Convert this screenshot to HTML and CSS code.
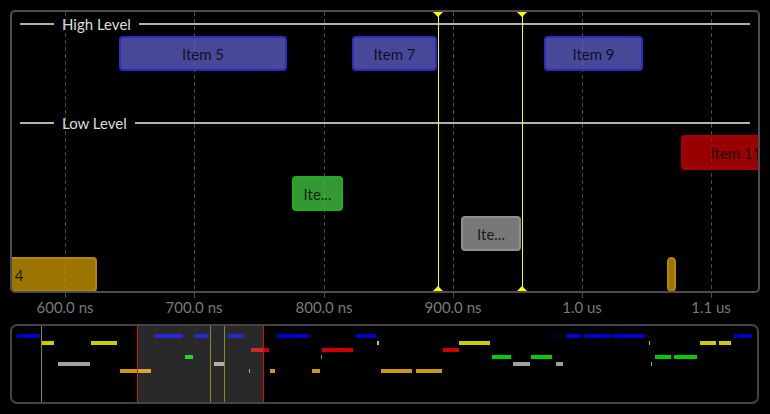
FILE: index.html
```html
<!DOCTYPE html>
<html>
<head>
<meta charset="utf-8">
<link rel="stylesheet" href="styles.css">
</head>
<body>
<div class="view">
  <div class="chart">
    <div class="inner">
      <div class="grid" style="left:53px"></div>
      <div class="grid" style="left:182px"></div>
      <div class="grid" style="left:312px"></div>
      <div class="grid" style="left:441px"></div>
      <div class="grid" style="left:570px"></div>
      <div class="grid" style="left:699px"></div>

      <div class="level">
        <span class="seg"></span><span class="lvl-label">High Level</span><span class="rule"></span>
      </div>
      <div class="track track-high">
        <div class="item blue" style="left:107px;width:168px;top:0">Item 5</div>
        <div class="item blue" style="left:340px;width:85px;top:0">Item 7</div>
        <div class="item blue" style="left:532px;width:99px;top:0">Item 9</div>
      </div>
      <div class="level">
        <span class="seg"></span><span class="lvl-label">Low Level</span><span class="rule"></span>
      </div>
      <div class="track track-low">
        <div class="item red" style="left:669px;width:110px;top:0">Item 11</div>
        <div class="item green" style="left:280px;width:51px;top:41px">Ite...</div>
        <div class="item gray" style="left:449px;width:60px;top:81px">Ite...</div>
        <div class="item yellow" style="left:-104px;width:189px;top:122px">Item 4</div>
        <div class="item yellow pill" style="left:655px;width:9px;top:122px"></div>
      </div>

      <div class="cursor" style="left:426px"><span class="tri tri-top"></span><span class="tri tri-bot"></span></div>
      <div class="cursor" style="left:510px"><span class="tri tri-top"></span><span class="tri tri-bot"></span></div>
    </div>
  </div>

  <div class="axis">
    <div class="tick" style="left:55px"><span>600.0 ns</span></div>
    <div class="tick" style="left:184px"><span>700.0 ns</span></div>
    <div class="tick" style="left:314px"><span>800.0 ns</span></div>
    <div class="tick" style="left:443px"><span>900.0 ns</span></div>
    <div class="tick" style="left:572px"><span>1.0 us</span></div>
    <div class="tick" style="left:701px"><span>1.1 us</span></div>
  </div>

  <div class="overview">
    <div class="ov-inner">
      <div class="ov-row">
        <i class="b c-blue" style="left:5px;width:23px"></i>
        <i class="b c-blue" style="left:143px;width:28px"></i>
        <i class="b c-blue" style="left:183px;width:14px"></i>
        <i class="b c-blue" style="left:216px;width:16px"></i>
        <i class="b c-blue" style="left:265px;width:32px"></i>
        <i class="b c-blue" style="left:344px;width:20px"></i>
        <i class="b c-blue" style="left:542px;width:1px"></i>
        <i class="b c-blue" style="left:554px;width:15px"></i>
        <i class="b c-blue" style="left:572px;width:27px"></i>
        <i class="b c-blue" style="left:601px;width:32px"></i>
        <i class="b c-blue" style="left:722px;width:3px"></i>
        <i class="b c-blue" style="left:726px;width:14px"></i>
      </div>
      <div class="ov-row">
        <i class="b c-yellow" style="left:29px;width:13px"></i>
        <i class="b c-yellow" style="left:79px;width:26px"></i>
        <i class="b c-yellow" style="left:365px;width:2px"></i>
        <i class="b c-yellow" style="left:447px;width:31px"></i>
        <i class="b c-yellow" style="left:637px;width:1px"></i>
        <i class="b c-yellow" style="left:688px;width:16px"></i>
        <i class="b c-yellow" style="left:707px;width:12px"></i>
      </div>
      <div class="ov-row">
        <i class="b c-red" style="left:239px;width:18px"></i>
        <i class="b c-red" style="left:310px;width:31px"></i>
        <i class="b c-red" style="left:431px;width:16px"></i>
      </div>
      <div class="ov-row">
        <i class="b c-green" style="left:173px;width:8px"></i>
        <i class="b c-green" style="left:309px;width:1px"></i>
        <i class="b c-green" style="left:480px;width:19px"></i>
        <i class="b c-green" style="left:519px;width:21px"></i>
        <i class="b c-green" style="left:643px;width:16px"></i>
        <i class="b c-green" style="left:662px;width:23px"></i>
      </div>
      <div class="ov-row">
        <i class="b c-gray" style="left:46px;width:32px"></i>
        <i class="b c-gray" style="left:202px;width:10px"></i>
        <i class="b c-gray" style="left:501px;width:17px"></i>
        <i class="b c-gray" style="left:544px;width:7px"></i>
        <i class="b c-gray" style="left:639px;width:1px"></i>
      </div>
      <div class="ov-row">
        <i class="b c-orange" style="left:108px;width:31px"></i>
        <i class="b c-orange" style="left:237px;width:1px"></i>
        <i class="b c-orange" style="left:258px;width:5px"></i>
        <i class="b c-orange" style="left:300px;width:8px"></i>
        <i class="b c-orange" style="left:369px;width:31px"></i>
        <i class="b c-orange" style="left:404px;width:26px"></i>
      </div>

      <div class="viewport" style="left:125px;width:127px"></div>
      <div class="marker" style="left:29px"></div>
      <div class="marker" style="left:198px"></div>
      <div class="marker" style="left:212px"></div>
    </div>
  </div>
</div>
</body>
</html>
```

FILE: styles.css
```css
html, body {
  margin: 0;
  padding: 0;
  background: #000;
}
body {
  font-family: Lato, "Noto Sans", "DejaVu Sans", sans-serif;
  font-size: 15px;
  width: 770px;
  height: 414px;
  overflow: hidden;
}
.view {
  padding: 10px 0 0 10px;
  display: flex;
  flex-direction: column;
  width: 750px;
}
.chart {
  width: 750px;
  height: 283px;
  box-sizing: border-box;
  border: 2px solid #4d4d4d;
  border-radius: 5px;
  overflow: hidden;
}
.inner {
  position: relative;
  width: 746px;
  height: 279px;
  overflow: hidden;
  display: flex;
  flex-direction: column;
}
.grid {
  position: absolute;
  top: 0;
  bottom: 0;
  width: 1px;
  background: repeating-linear-gradient(to bottom, #4a4a4a 0 4px, transparent 4px 7px);
}
.level {
  position: relative;
  height: 24px;
  flex: none;
  display: flex;
  align-items: center;
  padding: 0 8px;
  gap: 8px;
}
.seg {
  width: 34px;
  height: 2px;
  background: #b4b4b4;
}
.rule {
  flex: 1;
  height: 2px;
  background: #b4b4b4;
}
.lvl-label {
  color: #dedede;
  line-height: 18px;
  white-space: nowrap;
}
.track {
  position: relative;
  flex: none;
}
.track-high { height: 75px; }
.track-low { flex: 1; }
.item {
  position: absolute;
  height: 35px;
  box-sizing: border-box;
  border: 2px solid;
  border-radius: 4px;
  display: flex;
  align-items: center;
  justify-content: center;
  white-space: nowrap;
  color: rgba(0, 0, 0, 0.8);
  line-height: 18px;
}
.blue { background: rgba(96, 96, 204, 0.75); border-color: #2b2bc4; }
.green { background: rgba(68, 204, 68, 0.75); border-color: #22aa22; }
.gray { background: rgba(160, 160, 160, 0.75); border-color: #8e8e8e; }
.red { background: rgba(204, 0, 0, 0.75); border-color: #a80000; }
.yellow { background: rgba(208, 156, 0, 0.75); border-color: #b38705; }
.pill { border-radius: 5px; }
.cursor {
  position: absolute;
  top: 0;
  bottom: 0;
  width: 1px;
  background: #ffff00;
}
.tri {
  position: absolute;
  left: -5px;
  width: 0;
  height: 0;
  border-left: 5.5px solid transparent;
  border-right: 5.5px solid transparent;
}
.tri-top {
  top: 0;
  border-top: 5px solid #ffff00;
}
.tri-bot {
  bottom: 0;
  border-bottom: 5px solid #ffff00;
}
.axis {
  position: relative;
  height: 31px;
  flex: none;
}
.tick {
  position: absolute;
  top: 0;
  width: 1px;
  height: 5px;
  background: #4d4d4d;
}
.tick span {
  position: absolute;
  top: 5px;
  left: 0;
  transform: translateX(-50%);
  color: #7a7a7a;
  white-space: nowrap;
  line-height: 18px;
}
.overview {
  width: 749px;
  height: 80px;
  box-sizing: border-box;
  border: 2px solid #444;
  border-radius: 7px;
  overflow: hidden;
}
.ov-inner {
  position: relative;
  height: 76px;
  padding-top: 8px;
  box-sizing: border-box;
  display: flex;
  flex-direction: column;
  gap: 3px;
}
.ov-row {
  position: relative;
  height: 4px;
  flex: none;
}
.b {
  position: absolute;
  top: 0;
  height: 4px;
}
.c-blue { background: #0000cc; }
.c-yellow { background: #cccc00; }
.c-red { background: #cc0000; }
.c-green { background: #00cc00; }
.c-gray { background: #a0a0a0; }
.c-orange { background: #cc9910; }
.viewport {
  position: absolute;
  top: 0;
  bottom: 0;
  box-sizing: border-box;
  background: rgba(255, 255, 255, 0.16);
  border-left: 1px solid #cc1111;
  border-right: 1px solid #cc1111;
}
.marker {
  position: absolute;
  top: 0;
  bottom: 0;
  width: 1px;
  background: #8c8c1c;
}
```
